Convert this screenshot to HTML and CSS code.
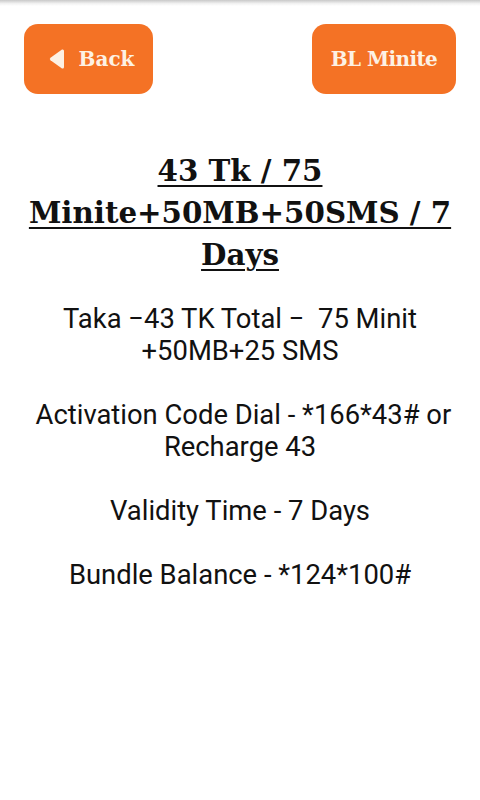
FILE: index.html
```html
<!DOCTYPE html>
<html lang="en">
<head>
  <meta charset="UTF-8">
  <meta name="viewport" content="width=device-width, initial-scale=1.0">
  <title>43 Tk Bundle</title>
  <link rel="stylesheet" href="styles.css">
</head>
<body>
  <div class="top-shadow"></div>
  <div class="toolbar">
    <button class="btn btn-back">
      <svg class="back-icon" width="15" height="22" viewBox="0 0 15 22">
        <path d="M13 1.5 Q15 1 15 3 L15 19 Q15 21 13 20.5 L1.5 12.2 Q0 11 1.5 9.8 Z" fill="#fdf1e4"/>
      </svg>
      <span>Back</span>
    </button>
    <button class="btn btn-title">BL Minite</button>
  </div>

  <div class="content">
    <h1 class="offer-title">43 Tk / 75 Minite+50MB+50SMS / 7 Days</h1>
    <p class="offer-info">
      Taka &minus;43 TK Total &minus;&nbsp; 75 Minit +50MB+25 SMS<br><br>
      &nbsp;Activation Code Dial - *166*43# or Recharge 43<br><br>
      Validity Time - 7 Days<br><br>
      Bundle Balance - *124*100#
    </p>
  </div>
</body>
</html>
```

FILE: styles.css
```css
* {
  box-sizing: border-box;
  margin: 0;
  padding: 0;
}
body {
  background: #ffffff;
  font-family: Roboto, 'Noto Sans', sans-serif;
  color: #111111;
  width: 480px;
  min-height: 800px;
}
.top-shadow {
  height: 6px;
  background: linear-gradient(to bottom, #c9c9c9, #f2f2f2 60%, #ffffff);
}
.toolbar {
  display: flex;
  justify-content: space-between;
  padding: 18px 24px 0 24px;
}
.btn {
  display: flex;
  align-items: center;
  justify-content: center;
  height: 70px;
  border: none;
  border-radius: 14px;
  background: #f47225;
  color: #fdf1e4;
  font-family: 'DejaVu Serif', serif;
  font-weight: bold;
  font-size: 20px;
  cursor: pointer;
}
.btn-back {
  width: 129px;
  gap: 15px;
  padding-left: 6px;
}
.btn-title {
  width: 144px;
  letter-spacing: -0.6px;
}
.back-icon {
  display: block;
}
.content {
  padding: 0 20px;
  text-align: center;
}
.offer-title {
  margin-top: 56px;
  font-family: 'DejaVu Serif', serif;
  font-weight: bold;
  font-size: 29.3px;
  line-height: 42px;
  text-decoration: underline;
  text-decoration-thickness: 2px;
  text-underline-offset: 4px;
  color: #111111;
}
.offer-info {
  margin-top: 27px;
  font-size: 27.4px;
  line-height: 32px;
}
```
